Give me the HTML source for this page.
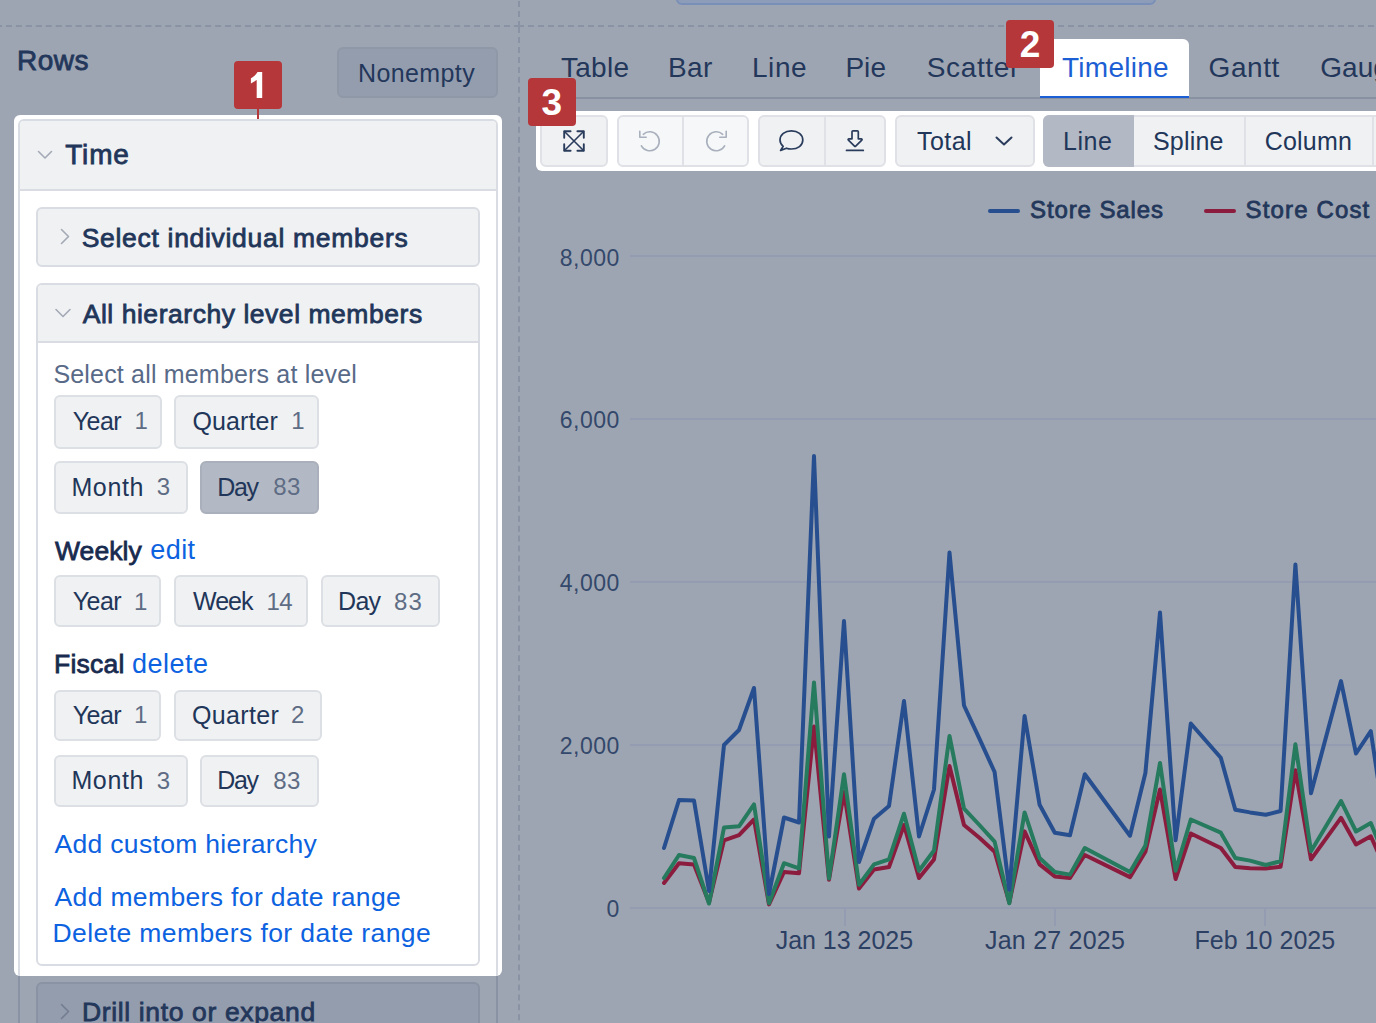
<!DOCTYPE html><html><head><meta charset="utf-8"><style>
html,body{margin:0;padding:0;width:1376px;height:1023px;overflow:hidden;background:#9ea5b2;}
.b,.t,svg{position:absolute;box-sizing:border-box;}
.t{white-space:nowrap;line-height:1;font-family:"Liberation Sans",sans-serif;}
</style></head><body>
<svg style="left:0;top:0" width="1376" height="1023"><g stroke="#8a93a3" stroke-width="2" fill="none"><line x1="-4.06" y1="26" x2="518" y2="26" stroke-dasharray="6.1 3.86"/><line x1="518" y1="26" x2="1376" y2="26" stroke-dasharray="6 4"/><line x1="519" y1="1" x2="519" y2="26" stroke-dasharray="6 4"/><line x1="519" y1="27" x2="519" y2="1023" stroke-dasharray="6 3.973"/></g></svg>
<div class="b" style="left:676px;top:-10px;width:480px;height:15px;background:#8d9db9;border:2px solid #7a8fb8;border-radius:0 0 6px 6px;"></div>
<div class="b" style="left:337px;top:47px;width:161px;height:51px;background:#949dae;border:2px solid #8f98a7;border-radius:6px;"></div>
<div class="b" style="left:18px;top:960px;width:480px;height:140px;background:#9ea5b2;border:2px solid #8a93a3;border-radius:0;"></div>
<div class="b" style="left:36px;top:982px;width:444px;height:118px;background:#949dae;border:2px solid #8a93a3;border-radius:6px;"></div>
<div class="b" style="left:14px;top:115px;width:488px;height:860.5px;background:#ffffff;border-radius:6px;"></div>
<div class="b" style="left:18px;top:119px;width:480px;height:856.5px;background:#ffffff;border:2px solid #d9dce2;border-radius:6px 6px 0 0;border-bottom:none"></div>
<div class="b" style="left:20px;top:121px;width:476px;height:70px;background:#f0f1f3;border-radius:4px 4px 0 0;border-bottom:2px solid #d9dce2"></div>
<div class="b" style="left:36px;top:207px;width:444px;height:60px;background:#f0f1f3;border:2px solid #d9dce2;border-radius:6px;"></div>
<div class="b" style="left:36px;top:283px;width:444px;height:683px;background:#ffffff;border:2px solid #d9dce2;border-radius:6px;"></div>
<div class="b" style="left:38px;top:285px;width:440px;height:58px;background:#f0f1f3;border-radius:4px 4px 0 0;border-bottom:2px solid #d9dce2"></div>
<div class="b" style="left:54px;top:395px;width:108px;height:54px;background:#f0f1f3;border:2px solid #dcdfe4;border-radius:6px;"></div>
<div class="b" style="left:174px;top:395px;width:145px;height:54px;background:#f0f1f3;border:2px solid #dcdfe4;border-radius:6px;"></div>
<div class="b" style="left:54px;top:461px;width:134px;height:53px;background:#f0f1f3;border:2px solid #dcdfe4;border-radius:6px;"></div>
<div class="b" style="left:200px;top:461px;width:119px;height:53px;background:#b3b9c4;border:2px solid #a9afbb;border-radius:6px;"></div>
<div class="b" style="left:54px;top:575px;width:107px;height:52px;background:#f0f1f3;border:2px solid #dcdfe4;border-radius:6px;"></div>
<div class="b" style="left:174px;top:575px;width:134px;height:52px;background:#f0f1f3;border:2px solid #dcdfe4;border-radius:6px;"></div>
<div class="b" style="left:321px;top:575px;width:119px;height:52px;background:#f0f1f3;border:2px solid #dcdfe4;border-radius:6px;"></div>
<div class="b" style="left:54px;top:690px;width:107px;height:51px;background:#f0f1f3;border:2px solid #dcdfe4;border-radius:6px;"></div>
<div class="b" style="left:174px;top:690px;width:148px;height:51px;background:#f0f1f3;border:2px solid #dcdfe4;border-radius:6px;"></div>
<div class="b" style="left:54px;top:755px;width:134px;height:52px;background:#f0f1f3;border:2px solid #dcdfe4;border-radius:6px;"></div>
<div class="b" style="left:200px;top:755px;width:119px;height:52px;background:#f0f1f3;border:2px solid #dcdfe4;border-radius:6px;"></div>
<div class="b" style="left:234px;top:61px;width:48px;height:48px;background:#b5373a;border-radius:4px;"></div>
<div class="b" style="left:257px;top:108px;width:2px;height:11px;background:#b5373a;border-radius:0;"></div>
<svg style="left:0;top:0" width="520" height="1023"><g fill="none" stroke-width="1.6" stroke-linecap="round" stroke-linejoin="round"><polyline points="38.5,151.5 45,158 51.5,151.5" stroke="#a3aab6"/><polyline points="61.5,229.5 68.5,236.5 61.5,243.5" stroke="#a3aab6"/><polyline points="56,309.5 63,316.5 70,309.5" stroke="#a3aab6"/><polyline points="61.5,1004.5 68.5,1011.5 61.5,1018.5" stroke="#727d90"/></g></svg>
<div class="b" style="left:540px;top:96.5px;width:836px;height:2.0px;background:#8891a1;border-radius:0;"></div>
<div class="b" style="left:1040px;top:38.7px;width:149px;height:59.8px;background:#ffffff;border-radius:6px 6px 0 0;border-bottom:2.5px solid #1c5fd4"></div>
<div class="b" style="left:536px;top:111px;width:864px;height:60px;background:#ffffff;border-radius:6px 0 0 6px;"></div>
<div class="b" style="left:540px;top:115px;width:68px;height:52px;background:#f0f1f3;border:2px solid #dfe1e6;border-radius:6px;"></div>
<div class="b" style="left:616.5px;top:115px;width:132.5px;height:52px;background:#f6f7f8;border:2px solid #dfe1e6;border-radius:6px;"></div>
<div class="b" style="left:682px;top:117px;width:2px;height:48px;background:#dfe1e6;border-radius:0;"></div>
<div class="b" style="left:758px;top:115px;width:127.5px;height:52px;background:#f0f1f3;border:2px solid #dfe1e6;border-radius:6px;"></div>
<div class="b" style="left:824px;top:117px;width:2px;height:48px;background:#dfe1e6;border-radius:0;"></div>
<div class="b" style="left:894.5px;top:115px;width:140.5px;height:52px;background:#f0f1f3;border:2px solid #dfe1e6;border-radius:6px;"></div>
<div class="b" style="left:1043px;top:115px;width:357px;height:52px;background:#f0f1f3;border:2px solid #dfe1e6;border-radius:6px;"></div>
<div class="b" style="left:1043px;top:115px;width:91px;height:52px;background:#b3b9c4;border-radius:6px 0 0 6px;"></div>
<div class="b" style="left:1244px;top:117px;width:2px;height:48px;background:#dfe1e6;border-radius:0;"></div>
<div class="b" style="left:1372px;top:117px;width:2px;height:48px;background:#dfe1e6;border-radius:0;"></div>
<svg style="left:0;top:0" width="1376" height="1023"><g fill="none" stroke-linecap="round" stroke-linejoin="round"><g stroke="#2a3c5c" stroke-width="1.6"><path d="M564.5,131.5 L583.5,150.5 M583.5,131.5 L564.5,150.5"/></g><g stroke="#2a3c5c" stroke-width="1.9"><path d="M564.2,137.8 V131.2 H570.6 M577.4,131.2 H583.8 V137.8 M564.2,144.2 V150.8 H570.6 M577.4,150.8 H583.8 V144.2"/></g><g stroke="#a8b0bd" stroke-width="1.6"><path d="M643.3,134.3 A9.5,9.5 0 1 1 641.4,145.8"/><path d="M639.8,131.2 V137.2 H646.2"/><path d="M722.7,134.3 A9.5,9.5 0 1 0 724.6,145.8"/><path d="M726.2,131.2 V137.2 H719.8"/></g><g stroke="#2a3c5c" stroke-width="1.7"><path d="M783.2,146.3 C780.8,144.4 780,142.2 780,140 C780,134.5 785,130.8 791.4,130.8 C797.8,130.8 802.8,134.5 802.8,140 C802.8,145.5 797.8,149 791.4,149 C789.5,149 788,148.8 786.5,148.2 L780.6,150.4 Z"/></g><g stroke="#2a3c5c" stroke-width="1.7"><path d="M852,131.8 Q852,130.8 853,130.8 H857.3 Q858.3,130.8 858.3,131.8 V138.8 H861.3 Q862.6,139.2 861.8,140.1 L855.7,146.2 Q855.1,146.8 854.5,146.2 L848.4,140.1 Q847.6,139.2 848.9,138.8 H852 Z"/><path d="M846.5,150.4 H863.3"/></g><g stroke="#2a3c5c" stroke-width="2"><polyline points="996.5,137.5 1004,144.5 1011.5,137.5"/></g></g></svg>
<div class="b" style="left:988px;top:209px;width:32px;height:4px;background:#274f8f;border-radius:2px;"></div>
<div class="b" style="left:1204px;top:209px;width:32px;height:4px;background:#8c1c3e;border-radius:2px;"></div>
<div class="b" style="left:630px;top:255px;width:746px;height:2px;background:#939cb0;border-radius:0;"></div>
<div class="b" style="left:630px;top:417.5px;width:746px;height:2.0px;background:#939cb0;border-radius:0;"></div>
<div class="b" style="left:630px;top:580.5px;width:746px;height:2.0px;background:#939cb0;border-radius:0;"></div>
<div class="b" style="left:630px;top:743.5px;width:746px;height:2.0px;background:#939cb0;border-radius:0;"></div>
<div class="b" style="left:630px;top:906.5px;width:746px;height:2.0px;background:#939cb0;border-radius:0;"></div>
<div class="b" style="left:844px;top:907px;width:2px;height:19px;background:#939cb0;border-radius:0;"></div>
<div class="b" style="left:1053.5px;top:907px;width:2.0px;height:19px;background:#939cb0;border-radius:0;"></div>
<div class="b" style="left:1264px;top:907px;width:2px;height:19px;background:#939cb0;border-radius:0;"></div>
<svg style="left:0;top:0" width="1376" height="1023"><g fill="none" stroke-width="4" stroke-linejoin="round" stroke-linecap="round"><polyline points="664,883 679,863.2 694,864.4 709,902.5 724,840.3 739,835.2 754,819.5 769,904.4 784,872 799,873.3 814,726.5 829,879.7 844,792 859,888.6 874,869.5 889,867 904,825 919,878 934,859.4 949.5,766 964,825 979.4,837.8 994.6,851.7 1009.3,902.5 1024.6,831.4 1039.6,864.4 1054.8,876.4 1070,878 1084.8,855 1130,877.1 1145.4,851.7 1160,789.5 1175.6,879 1190.8,833.5 1220.8,848 1235.3,867 1250,868.3 1265.7,868.6 1280.6,866.8 1295.4,770.2 1311,859.3 1341,817.8 1356,844.5 1370.8,836.3 1386,870" stroke="#8c1c3e"/><polyline points="664,878 679,855 694,858 709,903.5 724,827.6 739,826.3 754,804.3 769,903.3 784,863.2 799,868.3 814,682.5 829,878.4 844,774.3 859,884.8 874,864.4 889,859.4 904,813.7 919,870.8 934,850.5 949.5,736 964,808.6 979.4,825 994.6,841.6 1009.3,903.3 1024.6,812.4 1039.6,858 1054.8,872 1070,874.6 1084.8,848 1130,872 1145.4,845.4 1160,762.9 1175.6,870.8 1190.8,819.5 1220.8,832.7 1235.3,858 1250,860.6 1265.7,865 1280.6,861.2 1295.4,744.2 1311,851.2 1341,801 1356,831.5 1370.8,823 1386,860" stroke="#267a5e"/><polyline points="664,848 679,800 694,800.5 709,891 724,745 739,730 754,688 769,894 784,817.5 799,822.5 814,456 829,836.5 844,621 859,862 874,818.7 889,806 904,701 919,836.5 934,789.5 949.5,552.5 964,705.5 979.4,738.7 994.6,772 1009.3,889.8 1024.6,716 1039.6,804.8 1054.8,832.7 1070,835.2 1084.8,774.3 1130,835.7 1145.4,773 1160,612.5 1175.6,840.3 1190.8,723.5 1220.8,757.8 1235.3,809.8 1250,812.4 1265.7,814.8 1280.6,811 1295.4,564.5 1311,793.3 1341,681.1 1356,753.5 1370.8,731.2 1386,833" stroke="#274f8f"/></g></svg>
<div class="t" style="left:17.00px;top:47.30px;font-size:28px;font-weight:normal;color:#23375b;letter-spacing:0.529px;-webkit-text-stroke:0.8px #23375b;">Rows</div>
<div class="t" style="left:358.00px;top:60.74px;font-size:25px;font-weight:normal;color:#23375b;letter-spacing:0.394px;">Nonempty</div>
<div class="t" style="left:65.20px;top:141.20px;font-size:28px;font-weight:normal;color:#213659;letter-spacing:0.830px;-webkit-text-stroke:0.8px #213659;">Time</div>
<div class="t" style="left:81.70px;top:224.57px;font-size:26.5px;font-weight:normal;color:#213659;letter-spacing:0.694px;-webkit-text-stroke:0.8px #213659;">Select individual members</div>
<div class="t" style="left:82.70px;top:300.87px;font-size:26.5px;font-weight:normal;color:#213659;letter-spacing:0.538px;-webkit-text-stroke:0.8px #213659;">All hierarchy level members</div>
<div class="t" style="left:53.40px;top:361.84px;font-size:25px;font-weight:normal;color:#586a88;letter-spacing:0.182px;">Select all members at level</div>
<div class="t" style="left:72.80px;top:408.54px;font-size:25px;font-weight:normal;color:#213659;letter-spacing:-0.596px;">Year</div>
<div class="t" style="left:134.50px;top:409.38px;font-size:24px;font-weight:normal;color:#5e6c84;letter-spacing:0.000px;">1</div>
<div class="t" style="left:192.50px;top:408.54px;font-size:25px;font-weight:normal;color:#213659;letter-spacing:0.095px;">Quarter</div>
<div class="t" style="left:291.20px;top:409.38px;font-size:24px;font-weight:normal;color:#5e6c84;letter-spacing:0.000px;">1</div>
<div class="t" style="left:71.40px;top:474.64px;font-size:25px;font-weight:normal;color:#213659;letter-spacing:0.655px;">Month</div>
<div class="t" style="left:156.80px;top:475.48px;font-size:24px;font-weight:normal;color:#5e6c84;letter-spacing:0.000px;">3</div>
<div class="t" style="left:217.30px;top:474.64px;font-size:25px;font-weight:normal;color:#213659;letter-spacing:-1.329px;">Day</div>
<div class="t" style="left:273.30px;top:475.48px;font-size:24px;font-weight:normal;color:#5e6c84;letter-spacing:0.252px;">83</div>
<div class="t" style="left:55.00px;top:537.57px;font-size:26.5px;font-weight:normal;color:#182b4f;letter-spacing:0.071px;-webkit-text-stroke:0.8px #182b4f;">Weekly</div>
<div class="t" style="left:150.25px;top:537.14px;font-size:27px;font-weight:normal;color:#0c62e0;letter-spacing:0.440px;">edit</div>
<div class="t" style="left:72.80px;top:588.84px;font-size:25px;font-weight:normal;color:#213659;letter-spacing:-0.596px;">Year</div>
<div class="t" style="left:134.00px;top:589.68px;font-size:24px;font-weight:normal;color:#5e6c84;letter-spacing:0.000px;">1</div>
<div class="t" style="left:193.10px;top:588.84px;font-size:25px;font-weight:normal;color:#213659;letter-spacing:-1.017px;">Week</div>
<div class="t" style="left:266.50px;top:589.68px;font-size:24px;font-weight:normal;color:#5e6c84;letter-spacing:-0.600px;">14</div>
<div class="t" style="left:338.00px;top:588.84px;font-size:25px;font-weight:normal;color:#213659;letter-spacing:-0.679px;">Day</div>
<div class="t" style="left:394.00px;top:589.68px;font-size:24px;font-weight:normal;color:#5e6c84;letter-spacing:1.252px;">83</div>
<div class="t" style="left:54.00px;top:651.32px;font-size:26.5px;font-weight:normal;color:#182b4f;letter-spacing:0.237px;-webkit-text-stroke:0.8px #182b4f;">Fiscal</div>
<div class="t" style="left:132.00px;top:650.89px;font-size:27px;font-weight:normal;color:#0c62e0;letter-spacing:0.490px;">delete</div>
<div class="t" style="left:72.80px;top:702.59px;font-size:25px;font-weight:normal;color:#213659;letter-spacing:-0.596px;">Year</div>
<div class="t" style="left:134.00px;top:703.43px;font-size:24px;font-weight:normal;color:#5e6c84;letter-spacing:0.000px;">1</div>
<div class="t" style="left:192.00px;top:702.59px;font-size:25px;font-weight:normal;color:#213659;letter-spacing:0.329px;">Quarter</div>
<div class="t" style="left:290.90px;top:703.43px;font-size:24px;font-weight:normal;color:#5e6c84;letter-spacing:0.000px;">2</div>
<div class="t" style="left:71.40px;top:767.84px;font-size:25px;font-weight:normal;color:#213659;letter-spacing:0.655px;">Month</div>
<div class="t" style="left:156.80px;top:768.68px;font-size:24px;font-weight:normal;color:#5e6c84;letter-spacing:0.000px;">3</div>
<div class="t" style="left:217.30px;top:767.84px;font-size:25px;font-weight:normal;color:#213659;letter-spacing:-1.329px;">Day</div>
<div class="t" style="left:273.30px;top:768.68px;font-size:24px;font-weight:normal;color:#5e6c84;letter-spacing:0.252px;">83</div>
<div class="t" style="left:54.50px;top:830.97px;font-size:26.5px;font-weight:normal;color:#0c62e0;letter-spacing:0.320px;">Add custom hierarchy</div>
<div class="t" style="left:54.50px;top:883.97px;font-size:26.5px;font-weight:normal;color:#0c62e0;letter-spacing:0.357px;">Add members for date range</div>
<div class="t" style="left:52.50px;top:919.97px;font-size:26.5px;font-weight:normal;color:#0c62e0;letter-spacing:0.410px;">Delete members for date range</div>
<div class="t" style="left:81.90px;top:999.27px;font-size:26.5px;font-weight:normal;color:#23375b;letter-spacing:0.647px;-webkit-text-stroke:0.8px #23375b;">Drill into or expand</div>
<div class="t" style="left:560.90px;top:53.70px;font-size:28px;font-weight:normal;color:#23375b;letter-spacing:0.284px;">Table</div>
<div class="t" style="left:668.00px;top:53.70px;font-size:28px;font-weight:normal;color:#23375b;letter-spacing:0.376px;">Bar</div>
<div class="t" style="left:752.00px;top:53.70px;font-size:28px;font-weight:normal;color:#23375b;letter-spacing:0.545px;">Line</div>
<div class="t" style="left:845.40px;top:53.70px;font-size:28px;font-weight:normal;color:#23375b;letter-spacing:0.052px;">Pie</div>
<div class="t" style="left:926.70px;top:53.70px;font-size:28px;font-weight:normal;color:#23375b;letter-spacing:0.654px;">Scatter</div>
<div class="t" style="left:1062.00px;top:53.70px;font-size:28px;font-weight:normal;color:#1c5fd4;letter-spacing:0.258px;">Timeline</div>
<div class="t" style="left:1208.60px;top:53.70px;font-size:28px;font-weight:normal;color:#23375b;letter-spacing:0.549px;">Gantt</div>
<div class="t" style="left:1320.30px;top:53.70px;font-size:28px;font-weight:normal;color:#23375b;letter-spacing:0.000px;">Gauge</div>
<div class="t" style="left:917.00px;top:129.14px;font-size:25px;font-weight:normal;color:#213659;letter-spacing:0.437px;">Total</div>
<div class="t" style="left:1063.00px;top:129.14px;font-size:25px;font-weight:normal;color:#213659;letter-spacing:0.546px;">Line</div>
<div class="t" style="left:1153.00px;top:129.14px;font-size:25px;font-weight:normal;color:#213659;letter-spacing:0.182px;">Spline</div>
<div class="t" style="left:1264.70px;top:129.14px;font-size:25px;font-weight:normal;color:#213659;letter-spacing:0.212px;">Column</div>
<div class="t" style="left:1030.00px;top:198.38px;font-size:24px;font-weight:normal;color:#23375b;letter-spacing:0.893px;-webkit-text-stroke:0.8px #23375b;">Store Sales</div>
<div class="t" style="left:1245.60px;top:198.38px;font-size:24px;font-weight:normal;color:#23375b;letter-spacing:1.143px;-webkit-text-stroke:0.8px #23375b;">Store Cost</div>
<div class="t" style="left:775.70px;top:928.24px;font-size:25px;font-weight:normal;color:#2c4064;letter-spacing:-0.022px;">Jan 13 2025</div>
<div class="t" style="left:985.00px;top:928.24px;font-size:25px;font-weight:normal;color:#2c4064;letter-spacing:0.228px;">Jan 27 2025</div>
<div class="t" style="left:1194.40px;top:928.24px;font-size:25px;font-weight:normal;color:#2c4064;letter-spacing:0.041px;">Feb 10 2025</div>
<div class="t" style="left:559.84px;top:246.73px;font-size:23px;font-weight:normal;color:#33486b;letter-spacing:0.500px;">8,000</div>
<div class="t" style="left:559.84px;top:409.13px;font-size:23px;font-weight:normal;color:#33486b;letter-spacing:0.500px;">6,000</div>
<div class="t" style="left:559.84px;top:572.13px;font-size:23px;font-weight:normal;color:#33486b;letter-spacing:0.500px;">4,000</div>
<div class="t" style="left:559.84px;top:734.63px;font-size:23px;font-weight:normal;color:#33486b;letter-spacing:0.500px;">2,000</div>
<div class="t" style="left:606.60px;top:897.63px;font-size:23px;font-weight:normal;color:#33486b;letter-spacing:0.500px;">0</div>
<div class="b" style="left:1006px;top:20px;width:48px;height:48px;background:#b5373a;border-radius:4px;"></div>
<div class="b" style="left:528px;top:78px;width:48px;height:48px;background:#b5373a;border-radius:4px;"></div>
<svg style="left:0;top:0" width="300" height="120"><path d="M257.6,72 L262.2,72 L262.2,98.1 L256.7,98.1 L256.7,80 L250.9,83.4 L250.9,78.3 C253.5,76.8 256,75 257.6,72 Z" fill="#ffffff"/></svg>
<div class="t" style="left:1019.80px;top:26.08px;font-size:37px;font-weight:bold;color:#ffffff;letter-spacing:0.000px;">2</div>
<div class="t" style="left:541.50px;top:84.18px;font-size:37px;font-weight:bold;color:#ffffff;letter-spacing:0.000px;">3</div>
</body></html>
